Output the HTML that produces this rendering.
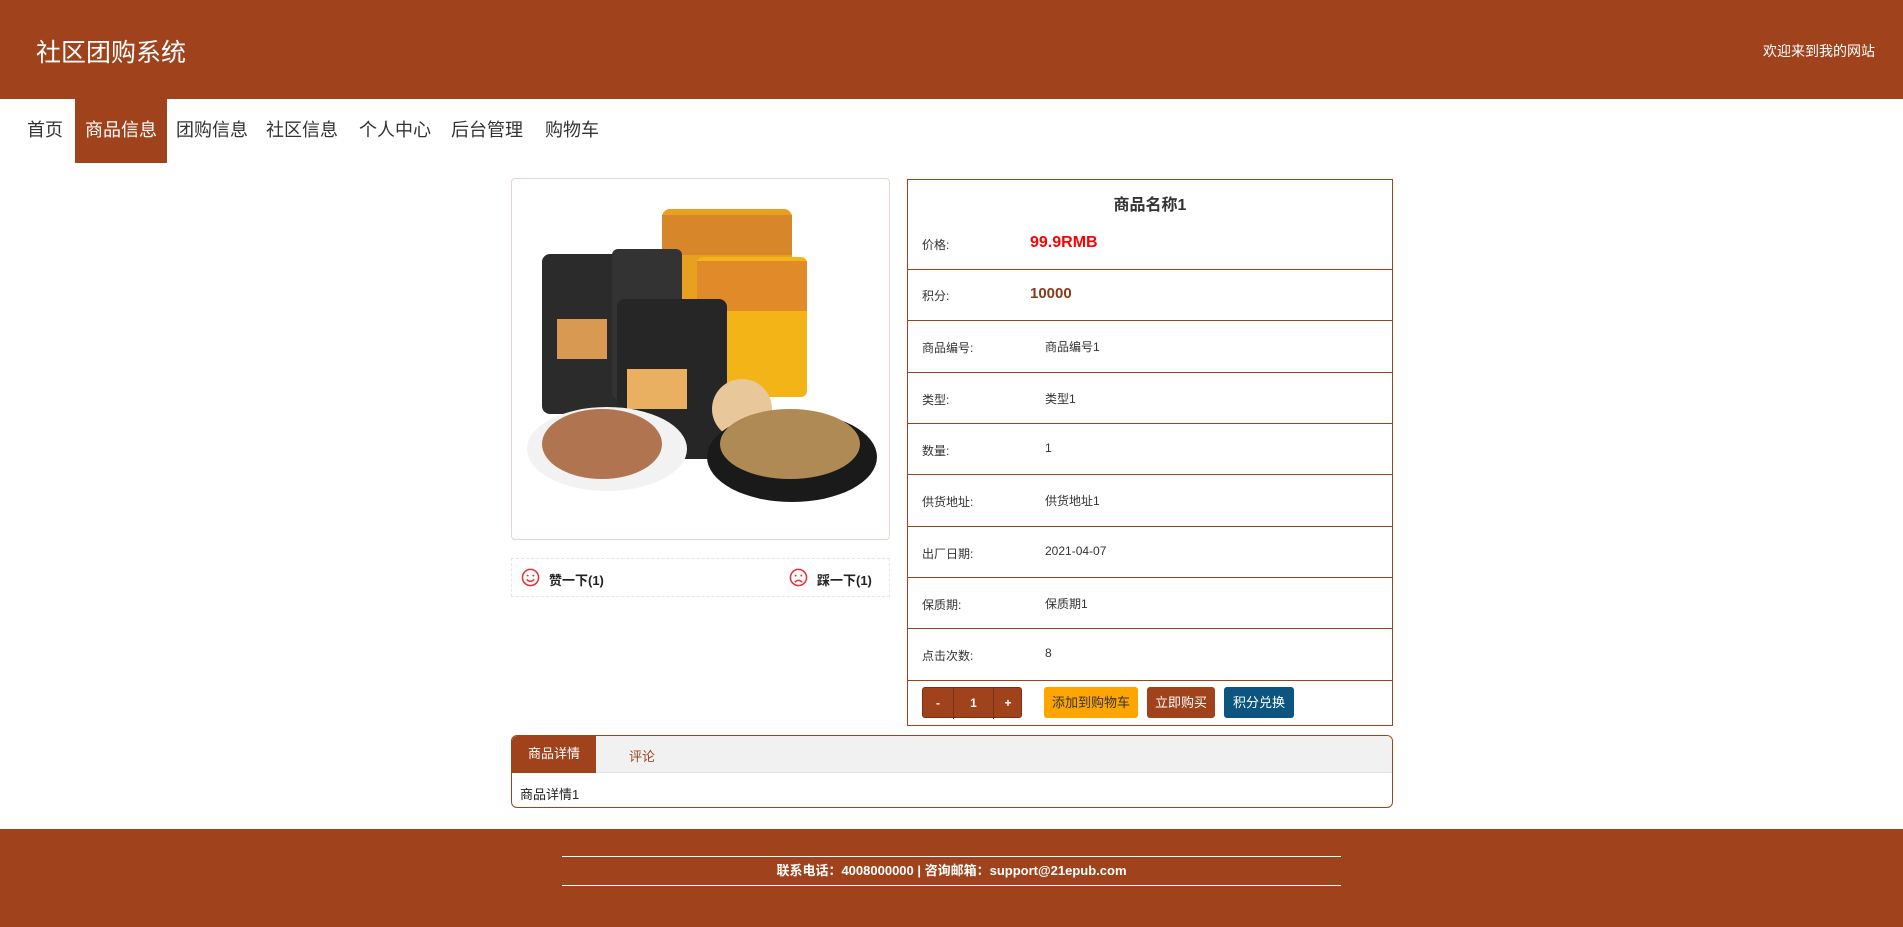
<!DOCTYPE html>
<html><head><meta charset="utf-8"><style>
*{margin:0;padding:0;box-sizing:border-box}
body{width:1903px;height:927px;position:relative;background:#fff;font-family:"Liberation Sans","Noto Sans CJK SC",sans-serif;color:#333;overflow:hidden}
.abs{position:absolute}
.hd{left:0;top:0;width:1903px;height:99px;background:#a0431c}
.nav a{position:absolute;top:99px;height:64px;line-height:62px;font-size:18px;color:#333;text-decoration:none;white-space:nowrap}
.tbl{left:907px;top:179px;width:486px;height:547px;border:1px solid #a0431c}
.row{position:absolute;left:0;width:484px;border-top:1px solid #a0431c;font-size:12px}
.lab{position:absolute;left:14px}
.val{position:absolute;left:137px}
.btn{position:absolute;top:687px;height:31px;line-height:31px;font-size:13px;color:#fff;text-align:center;border-radius:3px}
</style></head><body>
<div class="abs hd"></div>
<div class="abs" style="left:36px;top:33px;font-size:25px;color:#fff">社区团购系统</div>
<div class="abs" style="right:28px;top:41px;font-size:14px;color:#fff">欢迎来到我的网站</div>
<div class="nav">
<a style="left:27px">首页</a>
<a style="left:75px;width:92px;background:#a0431c;color:#fff;text-align:center">商品信息</a>
<a style="left:176px">团购信息</a>
<a style="left:266px">社区信息</a>
<a style="left:359px">个人中心</a>
<a style="left:451px">后台管理</a>
<a style="left:545px">购物车</a>
</div>
<div class="abs" style="left:511px;top:178px;width:379px;height:362px;border:1px solid #e5d6cf;border-radius:4px;overflow:hidden">
<svg width="379" height="362" viewBox="0 0 379 362">
<rect x="150" y="30" width="130" height="90" rx="8" fill="#e8a020"/>
<rect x="150" y="36" width="130" height="40" fill="#d7862a"/>
<rect x="185" y="78" width="110" height="140" rx="6" fill="#f3b418"/>
<rect x="185" y="82" width="110" height="50" fill="#e08a2a"/>
<rect x="30" y="75" width="110" height="160" rx="8" fill="#2b2b2b"/>
<rect x="100" y="70" width="70" height="150" rx="6" fill="#333"/>
<rect x="105" y="120" width="110" height="160" rx="8" fill="#262626"/>
<rect x="115" y="190" width="60" height="40" fill="#e8b060"/>
<rect x="45" y="140" width="50" height="40" fill="#d89a52"/>
<circle cx="230" cy="230" r="30" fill="#e8c89a"/>
<ellipse cx="95" cy="270" rx="80" ry="42" fill="#f2f2f2"/>
<ellipse cx="90" cy="265" rx="60" ry="35" fill="#b07550"/>
<ellipse cx="280" cy="278" rx="85" ry="45" fill="#1a1a1a"/>
<ellipse cx="278" cy="265" rx="70" ry="35" fill="#b08a55"/>
</svg></div>
<div class="abs" style="left:511px;top:558px;width:379px;height:39px;border:1px dashed #e6e6e6;font-size:13px;font-weight:bold;color:#222">
<svg class="abs" style="left:9px;top:9px" width="19" height="19" viewBox="0 0 20 20"><circle cx="10" cy="10" r="8.5" fill="none" stroke="#e83030" stroke-width="1.6"/><circle cx="7" cy="8" r="1" fill="#e83030"/><circle cx="13" cy="8" r="1" fill="#e83030"/><path d="M6 12 Q10 16 14 12" fill="none" stroke="#e83030" stroke-width="1.5"/></svg>
<span class="abs" style="left:37px;top:11px">赞一下(1)</span>
<svg class="abs" style="left:277px;top:9px" width="19" height="19" viewBox="0 0 20 20"><circle cx="10" cy="10" r="8.5" fill="none" stroke="#e83030" stroke-width="1.6"/><circle cx="7" cy="8" r="1" fill="#e83030"/><circle cx="13" cy="8" r="1" fill="#e83030"/><path d="M6 15 Q10 11 14 15" fill="none" stroke="#e83030" stroke-width="1.5"/></svg>
<span class="abs" style="left:305px;top:11px">踩一下(1)</span>
</div>
<div class="abs tbl">
<div class="abs" style="left:0;width:484px;top:11px;text-align:center;font-size:16px;font-weight:bold;color:#333">商品名称1</div>
<div class="abs" style="left:14px;top:56px;font-size:12px">价格:</div>
<div class="abs" style="left:122px;top:54px;font-size:16px;font-weight:bold;color:#f00">99.9RMB</div>
<div class="row" style="top:89px;height:52px"><span class="lab" style="top:17px">积分:</span><span class="abs" style="left:122px;top:15px;font-size:15px;font-weight:bold;color:#8a3a1a">10000</span></div>
<div class="row" style="top:140px;height:52px"><span class="lab" style="top:18px">商品编号:</span><span class="val" style="top:17px">商品编号1</span></div>
<div class="row" style="top:192px;height:52px"><span class="lab" style="top:18px">类型:</span><span class="val" style="top:17px">类型1</span></div>
<div class="row" style="top:243px;height:52px"><span class="lab" style="top:18px">数量:</span><span class="val" style="top:17px">1</span></div>
<div class="row" style="top:294px;height:52px"><span class="lab" style="top:18px">供货地址:</span><span class="val" style="top:17px">供货地址1</span></div>
<div class="row" style="top:346px;height:52px"><span class="lab" style="top:18px">出厂日期:</span><span class="val" style="top:17px">2021-04-07</span></div>
<div class="row" style="top:397px;height:52px"><span class="lab" style="top:18px">保质期:</span><span class="val" style="top:17px">保质期1</span></div>
<div class="row" style="top:448px;height:52px"><span class="lab" style="top:18px">点击次数:</span><span class="val" style="top:17px">8</span></div>
<div class="row" style="top:500px;height:46px;border-bottom:1px solid #a0431c"></div>
</div>
<div class="btn" style="left:922px;width:100px;background:#a0431c;border:1px solid #7a3014;font-weight:bold;font-size:12px">
<span class="abs" style="left:0;width:31px;border-right:1px solid #7a3014">-</span><span class="abs" style="left:31px;width:40px;border-right:1px solid #7a3014">1</span><span class="abs" style="left:71px;width:28px">+</span></div>
<div class="btn" style="left:1044px;width:94px;background:#ffa500;color:#333">添加到购物车</div>
<div class="btn" style="left:1147px;width:68px;background:#a0431c">立即购买</div>
<div class="btn" style="left:1224px;width:70px;background:#0b5580">积分兑换</div>
<div class="abs" style="left:511px;top:735px;width:882px;height:73px;border:1px solid #a0431c;border-radius:6px;overflow:hidden">
<div class="abs" style="left:0;top:0;width:880px;height:37px;background:#f1f1f1;border-bottom:1px solid #e3e3e3"></div>
<div class="abs" style="left:0;top:0;width:84px;height:37px;background:#a0431c;color:#fff;font-size:13px;line-height:36px;text-align:center">商品详情</div>
<div class="abs" style="left:117px;top:10px;font-size:13px;color:#a0431c">评论</div>
<div class="abs" style="left:8px;top:48px;font-size:13px;color:#222">商品详情1</div>
</div>
<div class="abs" style="left:0;top:829px;width:1903px;height:98px;background:#a0431c"></div>
<div class="abs" style="left:562px;top:856px;width:779px;height:30px;border-top:1px solid #fff;border-bottom:1px solid #fff;text-align:center;color:#fff;font-size:13px;font-weight:bold;line-height:28px">联系电话：4008000000 | 咨询邮箱：support@21epub.com</div>
</body></html>
